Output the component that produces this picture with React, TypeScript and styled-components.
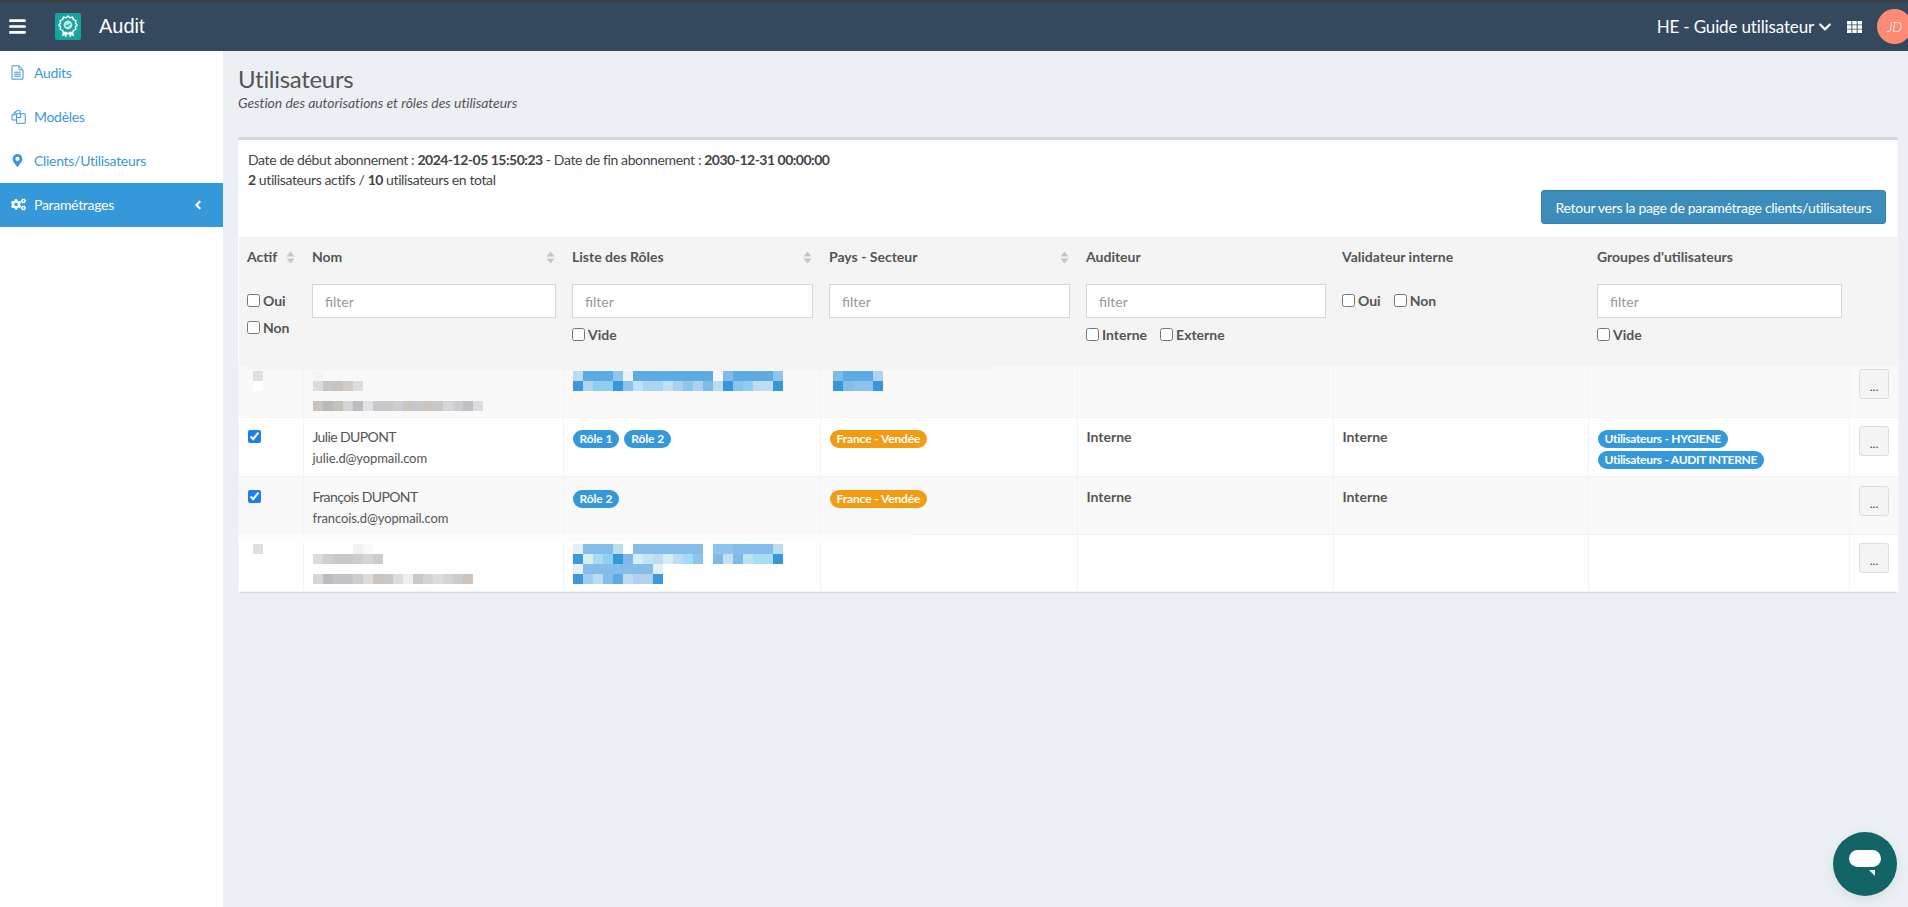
import React from 'react';
import styled, { createGlobalStyle } from 'styled-components';
import { FaAngleLeft, FaBars, FaChevronDown, FaCogs, FaMapMarkerAlt } from 'react-icons/fa';

const FONT = `Lato, "Noto Sans", sans-serif`;

const GlobalStyle = createGlobalStyle`
  html, body {
    margin: 0;
    height: 100%;
    overflow: hidden;
    background: #ecf0f5;
    font-family: ${FONT};
    font-size: 14px;
    letter-spacing: -0.3px;
    color: #444;
  }
  * { box-sizing: border-box; }
`;

const TopBar = styled.header`
  display: flex;
  align-items: center;
  height: 51px;
  padding-left: 8px;
  background: #34495e;
  border-top: 2px solid #3f3f3f;
  color: #fff;
  overflow: hidden;
`;

const MenuToggle = styled.span`
  display: flex;
  font-size: 19px;
`;

const LogoBox = styled.span`
  display: flex;
  align-items: center;
  justify-content: center;
  width: 26px;
  height: 27px;
  margin-left: 28px;
  border-radius: 2px;
  background: #14a59c;
`;

const AppName = styled.span`
  margin-left: 18px;
  font-family: "Liberation Sans", Arial, sans-serif;
  font-size: 20px;
  letter-spacing: 0;
`;

const TopRight = styled.div`
  display: flex;
  align-items: center;
  margin-left: auto;
  margin-right: -4px;
`;

const ClientName = styled.span`
  font-size: 17px;
  letter-spacing: -0.15px;
`;

const ClientCaret = styled.span`
  display: flex;
  margin-left: 4px;
  font-size: 14px;
`;

const GridIcon = styled.svg`
  margin-left: 15px;
  fill: #fff;
`;

const Avatar = styled.span`
  display: flex;
  align-items: center;
  justify-content: center;
  width: 35px;
  height: 35px;
  margin-left: 15px;
  border-radius: 50%;
  background: #ff8a75;
  font-size: 14px;
  font-style: italic;
  font-weight: 300;
`;

const Body = styled.div`
  display: flex;
  height: 856px;
`;

const Sidebar = styled.nav`
  width: 223px;
  flex-shrink: 0;
  background: #fff;
`;

const NavItem = styled.a<{ $active?: boolean }>`
  display: flex;
  align-items: center;
  height: 44px;
  padding: 0 18px 1px 11px;
  background: ${(p) => (p.$active ? '#3498db' : 'transparent')};
  color: ${(p) => (p.$active ? '#fff' : '#3c98d8')};
  font-size: 14px;
`;

const NavIcon = styled.span`
  display: flex;
  width: 23px;
  flex-shrink: 0;
  font-size: 15px;
`;

const NavAngle = styled.span`
  display: flex;
  margin-left: auto;
  font-size: 14px;
`;

const Content = styled.main`
  flex: 1;
  min-width: 0;
  padding: 13px 10px 0 15px;
`;

const Title = styled.h1`
  margin: 0;
  font-size: 24px;
  font-weight: 400;
  line-height: 30px;
  color: #555;
`;

const Subtitle = styled.p`
  margin: 0;
  font-size: 14px;
  font-style: italic;
  letter-spacing: -0.06px;
  line-height: 18px;
  color: #555;
`;

const Box = styled.section`
  margin-top: 25px;
  border-top: 3px solid #d2d6de;
  border-radius: 3px;
  background: #fff;
  box-shadow: 0 1px 1px rgba(0, 0, 0, 0.1);
`;

const BoxInfo = styled.div`
  padding: 10px 10px 0;
  line-height: 20px;
  letter-spacing: -0.38px;

  b {
    letter-spacing: -0.5px;
  }
`;

const BoxAction = styled.div`
  display: flex;
  justify-content: flex-end;
  padding: 0 12px 13px 0;
`;

const BackButton = styled.button`
  height: 34px;
  width: 345px;
  padding: 0;
  border: 1px solid #367fa9;
  border-radius: 3px;
  background: #3c8dbc;
  color: #fff;
  font-family: ${FONT};
  font-size: 14px;
  letter-spacing: -0.3px;
`;

const TableWrap = styled.div`
  position: relative;
`;

const Smudge = styled.div<{ $top: number; $left: number; $width: number; $height: number; $color: string }>`
  position: absolute;
  top: ${(p) => p.$top}px;
  left: ${(p) => p.$left}px;
  width: ${(p) => p.$width}px;
  height: ${(p) => p.$height}px;
  background: ${(p) => p.$color};
`;

const Table = styled.table`
  width: 100%;
  table-layout: fixed;
  border-collapse: collapse;
`;

const HeadCell = styled.th`
  height: 128px;
  padding: 10px 8px 0 8.5px;
  background: #f4f4f4;
  vertical-align: top;
  text-align: left;
  font-weight: 700;
  letter-spacing: 0;
  color: #555;
`;

const HeadTitle = styled.div`
  display: flex;
  align-items: center;
  justify-content: space-between;
  height: 20px;
  line-height: 20px;
`;

const SortIcon = styled.svg`
  width: 9px;
  height: 13px;
  margin-right: 1px;
  fill: #c3c7cd;
`;

const FilterInput = styled.input`
  display: block;
  width: 100%;
  height: 34px;
  margin-top: 17px;
  padding: 6px 12px;
  border: 1px solid #d2d6de;
  background: #fff;
  font-family: ${FONT};
  font-size: 14px;
  letter-spacing: 0;

  &::placeholder {
    color: #999;
  }
`;

const CheckRow = styled.div<{ $top: number; $gap?: number }>`
  display: flex;
  align-items: center;
  gap: ${(p) => p.$gap ?? 0}px;
  height: 16px;
  margin-top: ${(p) => p.$top}px;
`;

const CheckLabel = styled.label`
  display: flex;
  align-items: center;
  font-weight: 700;
  color: #555;
`;

const CheckBox = styled.input.attrs({ type: 'checkbox' })`
  width: 13px;
  height: 13px;
  margin: 0 3px 0 0;
`;

const Row = styled.tr<{ $height: number; $odd?: boolean }>`
  height: ${(p) => p.$height}px;
  background: ${(p) => (p.$odd ? '#f9f9f9' : '#fff')};
`;

const Cell = styled.td<{ $top?: number }>`
  padding: ${(p) => p.$top ?? 9}px 8px 0 8.5px;
  border: 1px solid #f4f4f4;
  vertical-align: top;
`;

const ActionCell = styled(Cell)`
  padding-left: 9px;
  padding-right: 0;
`;

const UserName = styled.div`
  line-height: 20px;
  letter-spacing: -0.6px;
  color: #555;
`;

const UserMail = styled.div`
  margin-top: 1px;
  font-size: 13px;
  line-height: 20px;
  letter-spacing: -0.1px;
  color: #555;
`;

const RowCheck = styled.input.attrs({ type: 'checkbox' })`
  display: block;
  width: 13px;
  height: 13px;
  margin: 3px 0 0;
  accent-color: #1a7ff0;
`;

const Badges = styled.div<{ $column?: boolean }>`
  display: flex;
  flex-direction: ${(p) => (p.$column ? 'column' : 'row')};
  align-items: flex-start;
  gap: ${(p) => (p.$column ? 3 : 5)}px;
  margin-top: 3px;
  letter-spacing: ${(p) => (p.$column ? -0.3 : -0.12)}px;
`;

const Badge = styled.span<{ $orange?: boolean }>`
  padding: 0 7px;
  border-radius: 9px;
  background: ${(p) => (p.$orange ? '#f39c12' : '#3498db')};
  color: #fff;
  font-size: 12px;
  font-weight: 700;
  line-height: 18px;
  white-space: nowrap;
`;

const Strong = styled.div`
  font-weight: 700;
  letter-spacing: 0;
  line-height: 20px;
  color: #555;
`;

const MoreButton = styled.button`
  display: block;
  width: 30px;
  height: 30px;
  padding: 6px 0 0;
  border: 1px solid #ddd;
  border-radius: 3px;
  background: #f4f4f4;
  color: #444;
  font-family: ${FONT};
  font-size: 12px;
`;

const MosaicArt = styled.svg<{ $left?: number }>`
  display: block;
  margin-left: ${(p) => p.$left ?? 0}px;
`;

const ChatButton = styled.button`
  position: fixed;
  right: 11px;
  bottom: 11px;
  display: flex;
  align-items: center;
  justify-content: center;
  width: 64px;
  height: 64px;
  padding: 0;
  border: 0;
  border-radius: 50%;
  background: #136464;
  box-shadow: 0 4px 14px rgba(0, 0, 0, 0.08);
`;

// blurred-out rows of the screenshot, one entry per 10px block, '' = nothing
type MosaicRows = string[][];

const Mosaic = ({ rows, left }: { rows: MosaicRows; left?: number }) => {
  const cols = Math.max(...rows.map((r) => r.length));
  return (
    <MosaicArt $left={left} width={cols * 10} height={rows.length * 10}>
      {rows.map((row, y) =>
        row.map((fill, x) => (fill ? <rect key={`${x}-${y}`} x={x * 10} y={y * 10} width={10} height={10} fill={fill} /> : null))
      )}
    </MosaicArt>
  );
};

const Sort = () => (
  <SortIcon viewBox="0 0 9 13">
    <path d="M4.5 0.5 8.6 5.4 H0.4 Z M0.4 7.6 H8.6 L4.5 12.5 Z" />
  </SortIcon>
);

const Logo = () => (
  <svg width="20" height="23" viewBox="0 0 20 23" fill="none" stroke="#fff">
    <path d="M6.2 14.5 4 21l2.6-1.2 1.3 2.4 1.6-5M13.8 14.5 16 21l-2.6-1.2-1.3 2.4-1.6-5" fill="#fff" strokeWidth="0.5" />
    <path
      d="M10 1.2l2 1.6 2.5-.6 1 2.4 2.4 1-.5 2.5L19 10l-1.6 1.9.5 2.5-2.4 1-1 2.4-2.5-.6-2 1.6-2-1.6-2.5.6-1-2.4-2.4-1 .5-2.5L1 10l1.6-1.9-.5-2.5 2.4-1 1-2.4 2.5.6z"
      fill="#14a59c"
      strokeWidth="1.5"
    />
    <circle cx="10" cy="10" r="4.4" fill="#bde9e5" stroke="none" />
    <path d="M7.9 10l1.5 1.5 2.8-2.8" stroke="#14a59c" strokeWidth="1.2" />
  </svg>
);

const FileIcon = () => (
  <svg width="13" height="15" viewBox="0 0 13 15" fill="none" stroke="currentColor" strokeWidth="1">
    <path d="M1 .8h7.2L12 4.6v9.6H1zM8 1v3.8h4" />
    <path d="M3.2 7.2h6.6M3.2 9.2h6.6M3.2 11.2h6.6" />
  </svg>
);

const FilesIcon = () => (
  <svg width="15" height="14" viewBox="0 0 15 14" fill="none" stroke="currentColor" strokeWidth="1">
    <path d="M6 .7h3v3M6 .7 1 5v5h4.5" />
    <path d="M.9 5h3.3V1.4" />
    <path d="M5.6 3.7h8.6v9.6H5.6zM9.6 3.9v3.6H5.8" />
  </svg>
);

const App = (): JSX.Element => (
  <>
    <GlobalStyle />
    <TopBar>
      <MenuToggle><FaBars /></MenuToggle>
      <LogoBox><Logo /></LogoBox>
      <AppName>Audit</AppName>
      <TopRight>
        <ClientName>HE - Guide utilisateur</ClientName>
        <ClientCaret><FaChevronDown /></ClientCaret>
        <GridIcon width="15" height="12" viewBox="0 0 15 12">
          <path d="M0 0h4.4v3.4H0zM5.3 0h4.4v3.4H5.3zM10.6 0H15v3.4h-4.4zM0 4.3h4.4v3.4H0zM5.3 4.3h4.4v3.4H5.3zM10.6 4.3H15v3.4h-4.4zM0 8.6h4.4V12H0zM5.3 8.6h4.4V12H5.3zM10.6 8.6H15V12h-4.4z" />
        </GridIcon>
        <Avatar>JD</Avatar>
      </TopRight>
    </TopBar>
    <Body>
      <Sidebar>
        <NavItem><NavIcon><FileIcon /></NavIcon>Audits</NavItem>
        <NavItem><NavIcon><FilesIcon /></NavIcon>Modèles</NavItem>
        <NavItem><NavIcon><FaMapMarkerAlt size={13} /></NavIcon>Clients/Utilisateurs</NavItem>
        <NavItem $active><NavIcon><FaCogs /></NavIcon>Paramétrages<NavAngle><FaAngleLeft /></NavAngle></NavItem>
      </Sidebar>
      <Content>
        <Title>Utilisateurs</Title>
        <Subtitle>Gestion des autorisations et rôles des utilisateurs</Subtitle>
        <Box>
          <BoxInfo>
            <div>Date de début abonnement : <b>2024-12-05 15:50:23</b> - Date de fin abonnement : <b>2030-12-31 00:00:00</b></div>
            <div><b>2</b> utilisateurs actifs / <b>10</b> utilisateurs en total</div>
          </BoxInfo>
          <BoxAction>
            <BackButton>Retour vers la page de paramétrage clients/utilisateurs</BackButton>
          </BoxAction>
          <TableWrap>
            <Table>
              <colgroup>
                <col width={65} />
                <col width={260} />
                <col width={257} />
                <col width={257} />
                <col width={256} />
                <col width={255} />
                <col width={261} />
                <col width={49} />
              </colgroup>
              <thead>
                <tr>
                  <HeadCell>
                    <HeadTitle>Actif<Sort /></HeadTitle>
                    <CheckRow $top={25}><CheckLabel><CheckBox />Oui</CheckLabel></CheckRow>
                    <CheckRow $top={11}><CheckLabel><CheckBox />Non</CheckLabel></CheckRow>
                  </HeadCell>
                  <HeadCell>
                    <HeadTitle>Nom<Sort /></HeadTitle>
                    <FilterInput placeholder="filter" />
                  </HeadCell>
                  <HeadCell>
                    <HeadTitle>Liste des Rôles<Sort /></HeadTitle>
                    <FilterInput placeholder="filter" />
                    <CheckRow $top={8}><CheckLabel><CheckBox />Vide</CheckLabel></CheckRow>
                  </HeadCell>
                  <HeadCell>
                    <HeadTitle>Pays - Secteur<Sort /></HeadTitle>
                    <FilterInput placeholder="filter" />
                  </HeadCell>
                  <HeadCell>
                    <HeadTitle>Auditeur</HeadTitle>
                    <FilterInput placeholder="filter" />
                    <CheckRow $top={8} $gap={13}>
                      <CheckLabel><CheckBox />Interne</CheckLabel>
                      <CheckLabel><CheckBox />Externe</CheckLabel>
                    </CheckRow>
                  </HeadCell>
                  <HeadCell>
                    <HeadTitle>Validateur interne</HeadTitle>
                    <CheckRow $top={25} $gap={13}>
                      <CheckLabel><CheckBox />Oui</CheckLabel>
                      <CheckLabel><CheckBox />Non</CheckLabel>
                    </CheckRow>
                  </HeadCell>
                  <HeadCell>
                    <HeadTitle>Groupes d'utilisateurs</HeadTitle>
                    <FilterInput placeholder="filter" />
                    <CheckRow $top={8}><CheckLabel><CheckBox />Vide</CheckLabel></CheckRow>
                  </HeadCell>
                  <HeadCell />
                </tr>
              </thead>
              <tbody>
                <Row $height={52} $odd>
                  <Cell $top={5}><Mosaic left={5} rows={[['#dfdfe2'], ['#ffffff']]} /></Cell>
                  <Cell $top={5}>
                    <Mosaic
                      rows={[
                        ['#f5f5f5'],
                        ['#dcdcdc', '#c5c5cb', '#c9c3bc', '#cfcdca', '#dcdcdc'],
                        [],
                        ['#c9c3bc', '#b9b9b6', '#c5c0ba', '#d4d4d4', '#bcbcc0', '#e0e2e6', '#c8c8cc', '#c8c8cc', '#d0cecc', '#ccc4bd', '#c8c8cc', '#ccc4bd', '#c8c8cc', '#d6d6d6', '#cbcbd0', '#c0c0c6', '#dcdcdc'],
                      ]}
                    />
                  </Cell>
                  <Cell $top={5}>
                    <Mosaic
                      rows={[
                        ['#bcdcf2', '#5eaae3', '#5eaae3', '#5eaae3', '#8fc4ec', '#eaf1f7', '#5eaae3', '#5eaae3', '#5eaae3', '#5eaae3', '#5eaae3', '#5eaae3', '#5eaae3', '#5eaae3', '#f6f9fb', '#7fbbe9', '#5eaae3', '#5eaae3', '#5eaae3', '#5eaae3', '#8fc4ec'],
                        ['#3d99dd', '#b3d3f0', '#8fcdf0', '#8fcdf0', '#3498db', '#8dc3eb', '#bfe1f3', '#a8d5f2', '#a8d5f2', '#bfe1f3', '#a8d0ef', '#8fc4ec', '#b0d0ee', '#7fbbe9', '#bcdcf2', '#3498db', '#8dc3eb', '#8fcdf0', '#bfdcf2', '#bfdcf2', '#3498db'],
                      ]}
                    />
                  </Cell>
                  <Cell $top={5}>
                    <Mosaic
                      left={3}
                      rows={[
                        ['#7fbbe9', '#5eaae3', '#5eaae3', '#5eaae3', '#afd2f0'],
                        ['#3498db', '#85bde9', '#8fc1ea', '#8fc1ea', '#3498db'],
                      ]}
                    />
                  </Cell>
                  <Cell />
                  <Cell />
                  <Cell />
                  <ActionCell $top={3}><MoreButton>...</MoreButton></ActionCell>
                </Row>
                <Row $height={59}>
                  <Cell><RowCheck defaultChecked /></Cell>
                  <Cell>
                    <UserName>Julie DUPONT</UserName>
                    <UserMail>julie.d@yopmail.com</UserMail>
                  </Cell>
                  <Cell><Badges><Badge>Rôle 1</Badge><Badge>Rôle 2</Badge></Badges></Cell>
                  <Cell><Badges><Badge $orange>France - Vendée</Badge></Badges></Cell>
                  <Cell><Strong>Interne</Strong></Cell>
                  <Cell><Strong>Interne</Strong></Cell>
                  <Cell>
                    <Badges $column>
                      <Badge>Utilisateurs - HYGIENE</Badge>
                      <Badge>Utilisateurs - AUDIT INTERNE</Badge>
                    </Badges>
                  </Cell>
                  <ActionCell $top={8}><MoreButton>...</MoreButton></ActionCell>
                </Row>
                <Row $height={58} $odd>
                  <Cell $top={10}><RowCheck defaultChecked /></Cell>
                  <Cell $top={10}>
                    <UserName>François DUPONT</UserName>
                    <UserMail>francois.d@yopmail.com</UserMail>
                  </Cell>
                  <Cell $top={10}><Badges><Badge>Rôle 2</Badge></Badges></Cell>
                  <Cell $top={10}><Badges><Badge $orange>France - Vendée</Badge></Badges></Cell>
                  <Cell $top={10}><Strong>Interne</Strong></Cell>
                  <Cell $top={10}><Strong>Interne</Strong></Cell>
                  <Cell />
                  <ActionCell><MoreButton>...</MoreButton></ActionCell>
                </Row>
                <Row $height={57}>
                  <Cell><Mosaic left={5} rows={[['#e0e0e4']]} /></Cell>
                  <Cell>
                    <Mosaic
                      rows={[
                        ['', '', '', '', '#f3f1f1', '#fafafa'],
                        ['#dcdcdc', '#d0ced0', '#c8c8cc', '#c8c8cc', '#d0cecc', '#d8d4d0', '#cbcbd0'],
                        [],
                        ['#d6d6da', '#bcbcc0', '#c4c4c8', '#c4c4c8', '#cfcdca', '#dcdcdc', '#ccc4bd', '#c8c8cc', '#dcdcdc', '#eeeeee', '#c8c8cc', '#d6d2ce', '#dcdcdc', '#d4d4d4', '#cbcbd0', '#ccc4bd'],
                      ]}
                    />
                  </Cell>
                  <Cell>
                    <Mosaic
                      rows={[
                        ['#e4eff8', '#85bdea', '#85bdea', '#85bdea', '#bcdcf2', '', '#85bdea', '#85bdea', '#85bdea', '#85bdea', '#85bdea', '#85bdea', '#85bdea', '', '#8fc4ec', '#8fc4ec', '#85bdea', '#85bdea', '#85bdea', '#85bdea', '#bcdcf2'],
                        ['#3d99dd', '#d5f0f5', '#a8dcf5', '#8fd0f0', '#3498db', '#7fb9e8', '#d5eef5', '#c0e6f5', '#bcdcf0', '#d5eef5', '#bcdcf2', '#a0dcf5', '#8fc4ec', '', '#7fb9e8', '#bfe1f3', '#7fb9e8', '#bfe1f3', '#a8dcf5', '#a8dcf5', '#3498db'],
                        ['#e4eff8', '#85bdea', '#85bdea', '#85bdea', '#85bdea', '#85bdea', '#85bdea', '#85bdea', '#e4eff8'],
                        ['#3d99dd', '#a0d0f0', '#bcdcf0', '#85bdea', '#5eaae3', '#bcdcf0', '#b3cff0', '#b3cff0', '#3d99dd'],
                      ]}
                    />
                  </Cell>
                  <Cell />
                  <Cell />
                  <Cell />
                  <Cell />
                  <ActionCell $top={8}><MoreButton>...</MoreButton></ActionCell>
                </Row>
              </tbody>
            </Table>
            <Smudge $top={128} $left={10} $width={745} $height={5} $color="#f4f4f4" />
            <Smudge $top={297} $left={0} $width={674} $height={8} $color="#fcfcfc" />
          </TableWrap>
        </Box>
      </Content>
    </Body>
    <ChatButton aria-label="chat">
      <svg width="32" height="28" viewBox="0 0 32 28">
        <rect x="0" y="0" width="32" height="17" rx="8.5" fill="#fff" />
        <path d="M26 20v6l-6-6z" fill="#fff" />
      </svg>
    </ChatButton>
  </>
);

export default App;
